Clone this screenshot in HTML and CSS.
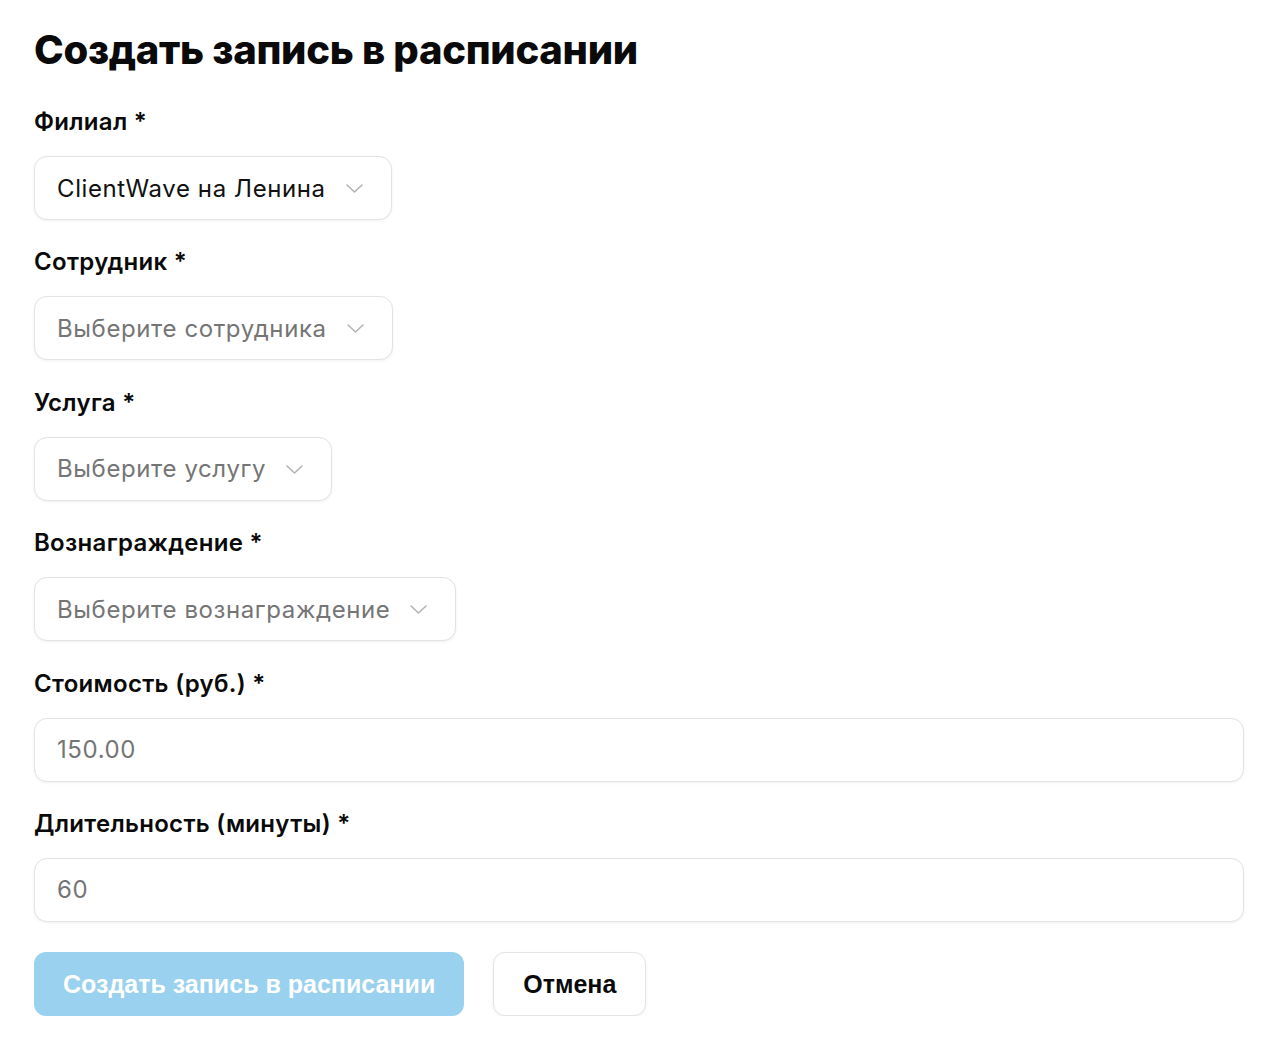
FILE: index.html
```html
<!DOCTYPE html>
<html lang="ru">
<head>
<meta charset="utf-8">
<title>Создать запись в расписании</title>
<link rel="stylesheet" href="styles.css">
</head>
<body>
<main class="page">
  <h1 class="title">Создать запись в расписании</h1>
  <form class="form">
    <div class="field">
      <label class="label">Филиал *</label>
      <div class="select">
        <span class="select-value">ClientWave на Ленина</span>
        <svg class="chev" viewBox="0 0 17 9" width="17" height="9"><path d="M1 1l7.5 7 7.5-7" fill="none" stroke="#b3b3b3" stroke-width="1.6" stroke-linecap="round" stroke-linejoin="round"/></svg>
      </div>
    </div>
    <div class="field">
      <label class="label">Сотрудник *</label>
      <div class="select">
        <span class="select-value placeholder">Выберите сотрудника</span>
        <svg class="chev" viewBox="0 0 17 9" width="17" height="9"><path d="M1 1l7.5 7 7.5-7" fill="none" stroke="#b3b3b3" stroke-width="1.6" stroke-linecap="round" stroke-linejoin="round"/></svg>
      </div>
    </div>
    <div class="field">
      <label class="label">Услуга *</label>
      <div class="select">
        <span class="select-value placeholder">Выберите услугу</span>
        <svg class="chev" viewBox="0 0 17 9" width="17" height="9"><path d="M1 1l7.5 7 7.5-7" fill="none" stroke="#b3b3b3" stroke-width="1.6" stroke-linecap="round" stroke-linejoin="round"/></svg>
      </div>
    </div>
    <div class="field">
      <label class="label">Вознаграждение *</label>
      <div class="select">
        <span class="select-value placeholder">Выберите вознаграждение</span>
        <svg class="chev" viewBox="0 0 17 9" width="17" height="9"><path d="M1 1l7.5 7 7.5-7" fill="none" stroke="#b3b3b3" stroke-width="1.6" stroke-linecap="round" stroke-linejoin="round"/></svg>
      </div>
    </div>
    <div class="field">
      <label class="label">Стоимость (руб.) *</label>
      <div class="input"><span class="placeholder">150.00</span></div>
    </div>
    <div class="field">
      <label class="label">Длительность (минуты) *</label>
      <div class="input"><span class="placeholder">60</span></div>
    </div>
    <div class="actions">
      <button type="button" class="btn btn-primary">Создать запись в расписании</button>
      <button type="button" class="btn btn-secondary">Отмена</button>
    </div>
  </form>
</main>
</body>
</html>
```

FILE: styles.css
```css
* { box-sizing: border-box; }
html, body { margin: 0; padding: 0; background: #fff; }
body {
  font-family: Inter, "Noto Sans", sans-serif;
  color: #111;
}
.page {
  padding: 22px 28px 0 34px;
}
.title {
  margin: 0;
  font-size: 40px;
  line-height: 56px;
  font-weight: 800;
  letter-spacing: -0.3px;
  color: #0a0a0a;
}
.form {
  display: flex;
  flex-direction: column;
  margin-top: 28px;
}
.field {
  display: flex;
  flex-direction: column;
  align-items: flex-start;
  margin-bottom: 26.4px;
}
.label {
  font-size: 24px;
  line-height: 32px;
  font-weight: 600;
  letter-spacing: 0.3px;
  margin-bottom: 18px;
  color: #0a0a0a;
}
.select, .input {
  height: 64px;
  border: 1px solid #e3e3e3;
  border-radius: 13px;
  background: #fff;
  box-shadow: 0 1px 3px rgba(0,0,0,0.06);
  display: flex;
  align-items: center;
  font-size: 24px;
  letter-spacing: 0.6px;
}
.select {
  padding: 0 28px 0 22px;
  gap: 20px;
}
.input {
  width: 100%;
  padding: 0 22px;
}
.select-value { color: #111; }
.placeholder { color: #757575; }
.chev { display: block; margin-top: 1px; }
.actions {
  display: flex;
  gap: 29px;
  margin-top: 4px;
}
.btn {
  height: 64px;
  border-radius: 12px;
  font-family: "Liberation Sans", Arial, sans-serif;
  font-size: 25px;
  font-weight: 700;
  padding: 0 29px;
  cursor: pointer;
}
.btn-primary {
  background: #99d1ee;
  color: #fff;
  border: none;
}
.btn-secondary {
  background: #fff;
  color: #0a0a0a;
  border: 1px solid #e3e3e3;
  box-shadow: 0 1px 3px rgba(0,0,0,0.06);
}
```
